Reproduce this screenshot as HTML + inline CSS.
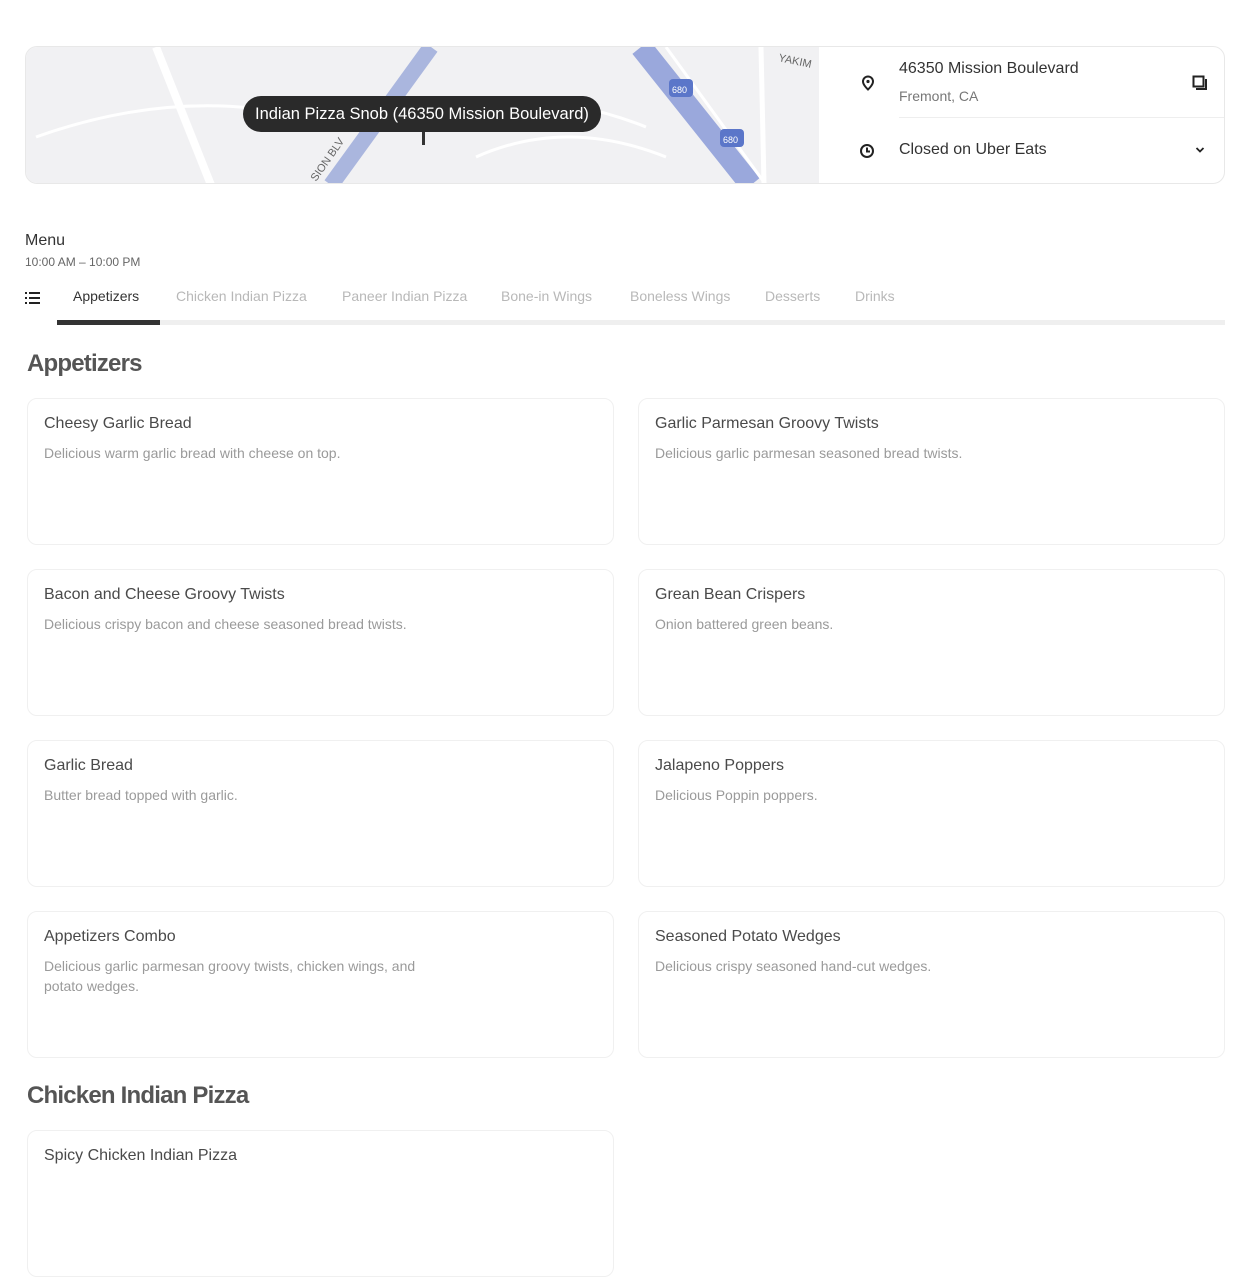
<!DOCTYPE html>
<html><head><style>
*{margin:0;padding:0;box-sizing:border-box}
body{width:1250px;height:1169px;overflow:hidden;background:#fff;font-family:"Liberation Sans",sans-serif;color:#545454;position:relative}
.abs{position:absolute}
.top{left:25px;top:46px;width:1200px;height:138px;border:1px solid #e8e8e8;border-radius:12px;overflow:hidden}
.map{left:0;top:0;width:793px;height:138px;background:#f1f1f3}
.pill{left:217px;top:49px;height:36px;padding:0 12px;background:#2a2a2a;color:#fff;border-radius:18px;font-size:16.5px;line-height:36px;white-space:nowrap}
.card{border:1px solid #f0f0f0;border-radius:10px;width:587px;height:147px}
.card h3{position:absolute;left:16px;top:16px;font-size:16px;font-weight:normal;color:#4a4a4a}
.card p{position:absolute;left:16px;top:44px;font-size:14px;color:#9a9a9a;line-height:20px;width:400px}
.tab{top:288px;font-size:14px;color:#b8b8b8}
h2{position:absolute;font-size:24px;font-weight:bold;color:#555;letter-spacing:-0.8px}
</style></head><body>
<div class="abs top">
 <div class="abs map">
  <svg width="793" height="138" class="abs" style="left:0;top:0">
   <path d="M130 0 L185 138" stroke="#fff" stroke-width="8"/>
   <path d="M305 138 L405 0" stroke="#aab6de" stroke-width="16"/>
   <path d="M615 0 L725 138" stroke="#9aa8dc" stroke-width="22"/>
   <path d="M640 0 L740 138" stroke="#fff" stroke-width="3"/>
   <path d="M735 0 L738 138" stroke="#fff" stroke-width="5"/>
   <path d="M10 90 Q150 40 280 70 M420 60 Q520 40 620 80 M450 110 Q540 70 640 110" stroke="#fff" stroke-width="3" fill="none"/>
   <rect x="643" y="32" width="24" height="18" rx="4" fill="#5b76c9"/><text x="646" y="46" font-size="9" fill="#fff" font-family="Liberation Sans">680</text>
   <rect x="694" y="82" width="24" height="18" rx="4" fill="#5b76c9"/><text x="697" y="96" font-size="9" fill="#fff" font-family="Liberation Sans">680</text>
   <text x="752" y="14" font-size="11" fill="#666" transform="rotate(12 752 14)" font-family="Liberation Sans">YAKIM</text>
   <text x="290" y="135" font-size="11" fill="#666" transform="rotate(-55 290 135)" font-family="Liberation Sans">SION BLV</text>
   <rect x="396" y="84" width="3" height="14" fill="#333"/>
  </svg>
  <div class="abs pill">Indian Pizza Snob (46350 Mission Boulevard)</div>
 </div>
 <svg class="abs" style="left:834px;top:28px" width="16" height="16" viewBox="0 0 16 16"><path d="M8 1.5a5 5 0 0 0-5 5c0 3.5 5 8 5 8s5-4.5 5-8a5 5 0 0 0-5-5z" fill="none" stroke="#222" stroke-width="2"/><circle cx="8" cy="6.5" r="1.6" fill="#222"/></svg>
 <div class="abs" style="left:873px;top:13px;font-size:16px;color:#333">46350 Mission Boulevard</div>
 <div class="abs" style="left:873px;top:41px;font-size:14px;color:#777">Fremont, CA</div>
 <svg class="abs" style="left:1166px;top:28px" width="16" height="16"><rect x="1.5" y="1.5" width="10" height="10" fill="none" stroke="#222" stroke-width="2"/><path d="M14 4v10H4" fill="none" stroke="#222" stroke-width="2"/></svg>
 <div class="abs" style="left:873px;top:70px;width:327px;height:1px;background:#eee"></div>
 <svg class="abs" style="left:833px;top:96px" width="16" height="16"><circle cx="8" cy="8" r="6" fill="none" stroke="#222" stroke-width="2"/><path d="M8 4.5V8.5H11" fill="none" stroke="#222" stroke-width="2"/></svg>
 <div class="abs" style="left:873px;top:94px;font-size:16px;color:#333">Closed on Uber Eats</div>
 <svg class="abs" style="left:1169px;top:99px" width="10" height="8"><path d="M1.5 2l3.5 3.5L8.5 2" fill="none" stroke="#222" stroke-width="1.8"/></svg>
</div>
<div class="abs" style="left:25px;top:232px;font-size:16px;color:#333">Menu</div>
<div class="abs" style="left:25px;top:255px;font-size:12px;color:#666">10:00 AM – 10:00 PM</div>
<svg class="abs" style="left:25px;top:292px" width="16" height="13"><g fill="#222"><rect x="0" y="0" width="2" height="2"/><rect x="4" y="0" width="11" height="2"/><rect x="0" y="5" width="2" height="2"/><rect x="4" y="5" width="11" height="2"/><rect x="0" y="10" width="2" height="2"/><rect x="4" y="10" width="11" height="2"/></g></svg>
<div class="abs tab" style="left:73px;color:#333">Appetizers</div>
<div class="abs tab" style="left:176px">Chicken Indian Pizza</div>
<div class="abs tab" style="left:342px">Paneer Indian Pizza</div>
<div class="abs tab" style="left:501px">Bone-in Wings</div>
<div class="abs tab" style="left:630px">Boneless Wings</div>
<div class="abs tab" style="left:765px">Desserts</div>
<div class="abs tab" style="left:855px">Drinks</div>
<div class="abs" style="left:57px;top:320px;width:1168px;height:5px;background:#efefef"></div>
<div class="abs" style="left:57px;top:320px;width:103px;height:5px;background:#333"></div>
<h2 style="left:27px;top:350px">Appetizers</h2>
<div class="abs card" style="left:27px;top:398px"><h3>Cheesy Garlic Bread</h3><p>Delicious warm garlic bread with cheese on top.</p></div>
<div class="abs card" style="left:638px;top:398px"><h3>Garlic Parmesan Groovy Twists</h3><p>Delicious garlic parmesan seasoned bread twists.</p></div>
<div class="abs card" style="left:27px;top:569px"><h3>Bacon and Cheese Groovy Twists</h3><p>Delicious crispy bacon and cheese seasoned bread twists.</p></div>
<div class="abs card" style="left:638px;top:569px"><h3>Grean Bean Crispers</h3><p>Onion battered green beans.</p></div>
<div class="abs card" style="left:27px;top:740px"><h3>Garlic Bread</h3><p>Butter bread topped with garlic.</p></div>
<div class="abs card" style="left:638px;top:740px"><h3>Jalapeno Poppers</h3><p>Delicious Poppin poppers.</p></div>
<div class="abs card" style="left:27px;top:911px"><h3>Appetizers Combo</h3><p>Delicious garlic parmesan groovy twists, chicken wings, and<br>potato wedges.</p></div>
<div class="abs card" style="left:638px;top:911px"><h3>Seasoned Potato Wedges</h3><p>Delicious crispy seasoned hand-cut wedges.</p></div>
<h2 style="left:27px;top:1082px">Chicken Indian Pizza</h2>
<div class="abs card" style="left:27px;top:1130px"><h3>Spicy Chicken Indian Pizza</h3></div>
</body></html>
